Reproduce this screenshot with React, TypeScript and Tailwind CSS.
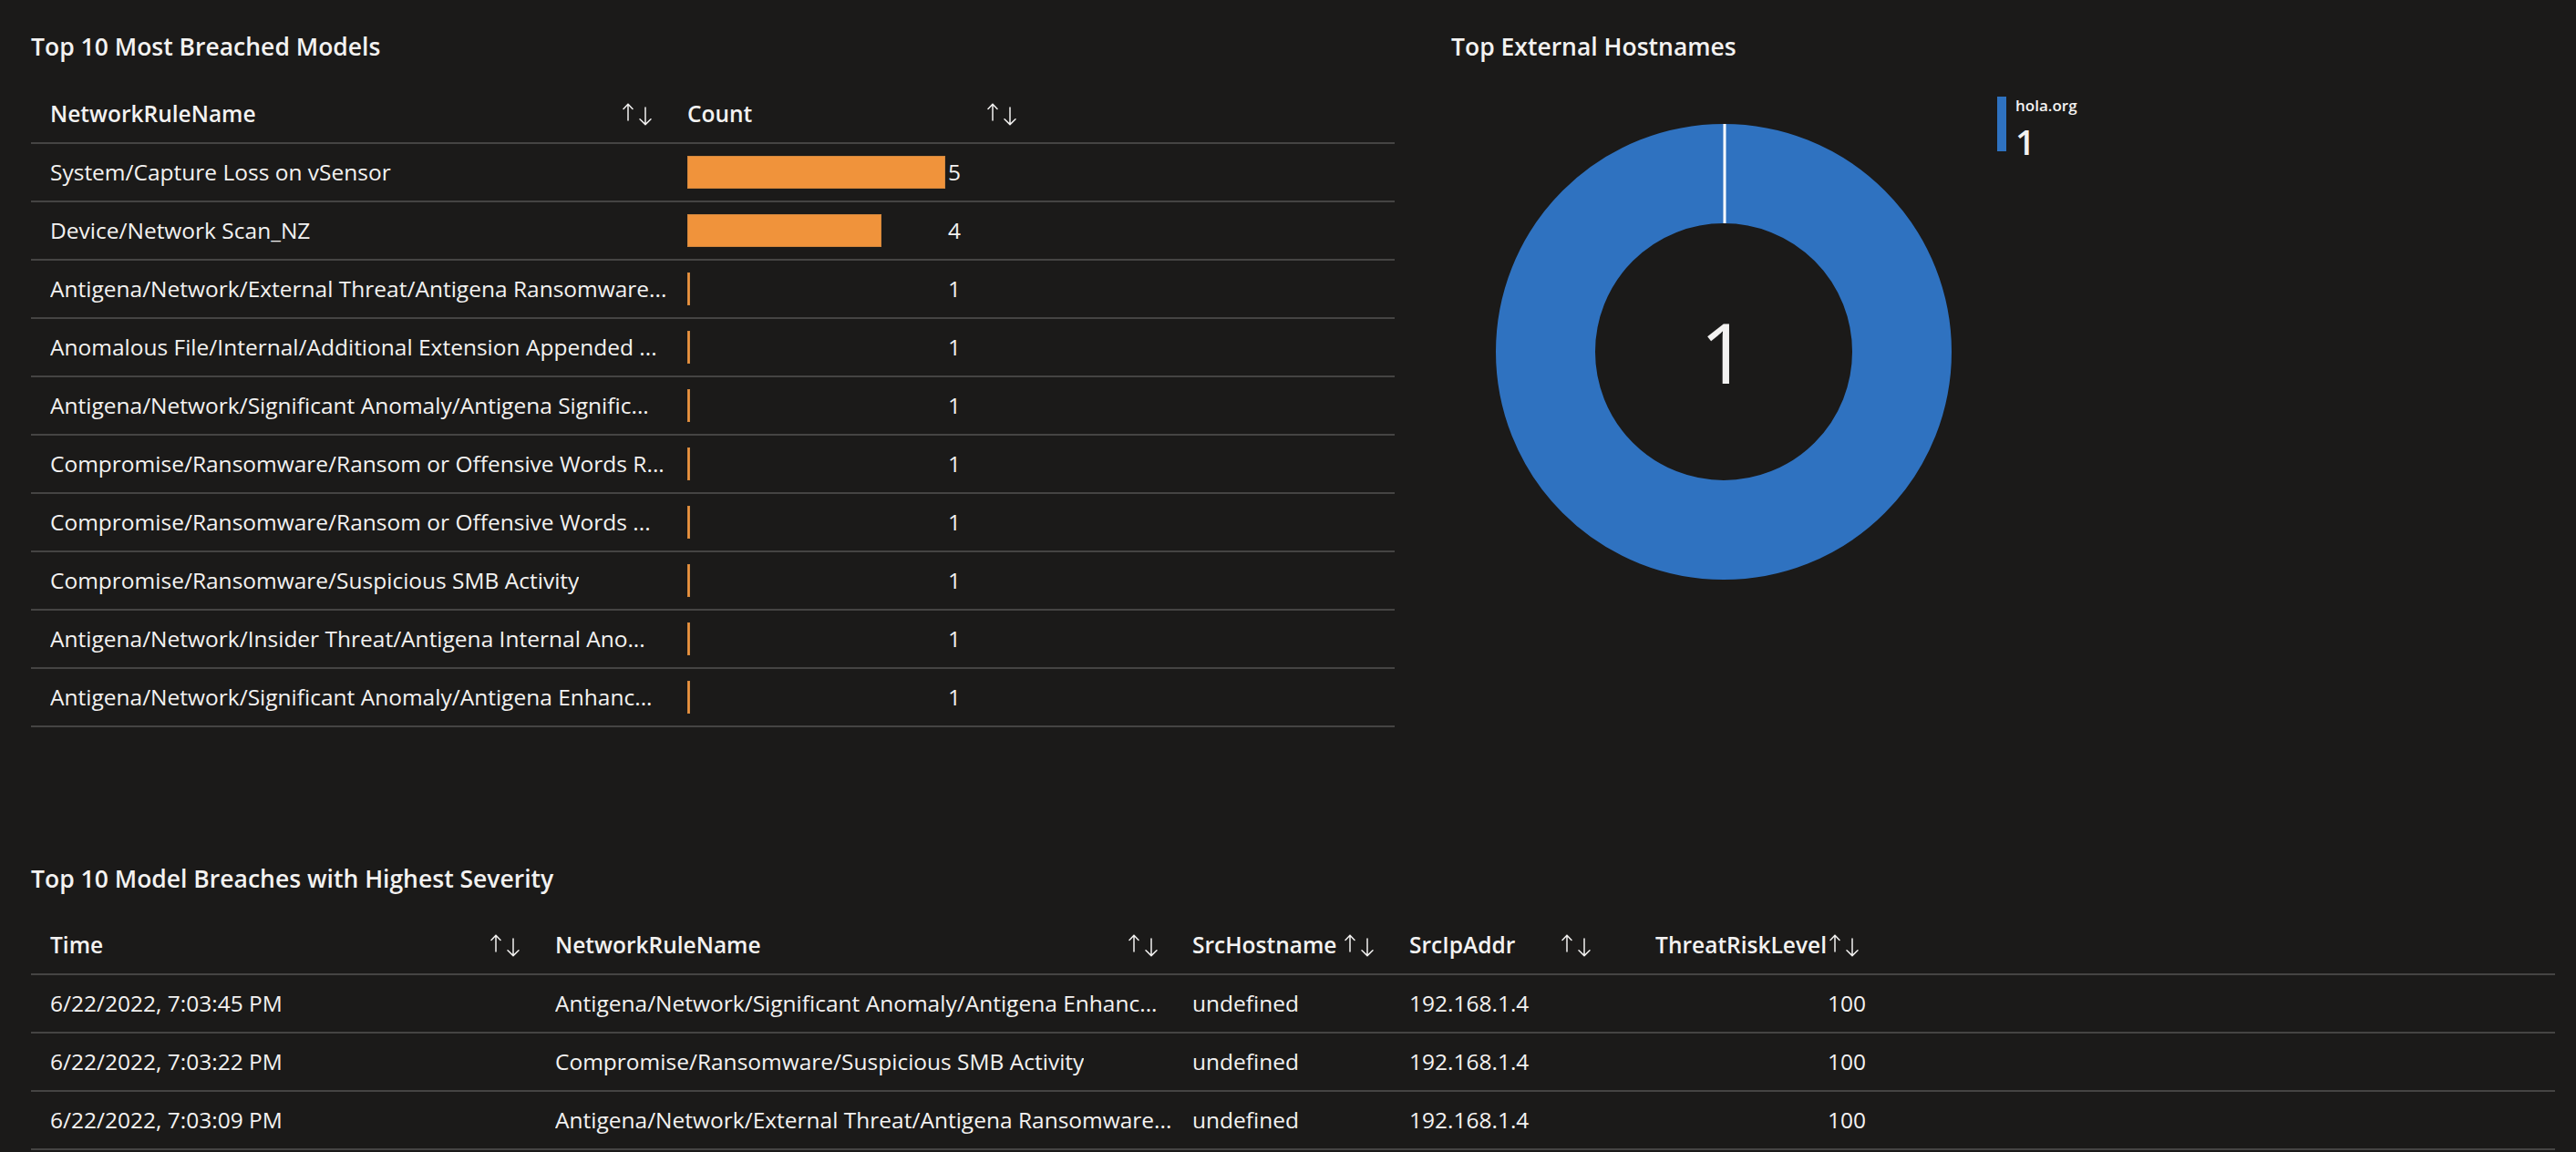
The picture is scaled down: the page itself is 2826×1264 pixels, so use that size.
import React from "react";

const SortIcon = () => (
  <svg
    width="33"
    height="25"
    viewBox="0 0 33 25"
    fill="none"
    stroke="#f3f2f1"
    strokeWidth="1.5"
    strokeLinecap="round"
    strokeLinejoin="round"
    className="shrink-0"
  >
    <path d="M6 1.2V19M1 6.4L6 1.2L11 6.4" />
    <path d="M25 5V23.6M19 17.8L25 23.6L31 17.8" />
  </svg>
);

const breached: [string, number, number][] = [
  ["System/Capture Loss on vSensor", 5, 283],
  ["Device/Network Scan_NZ", 4, 213],
  ["Antigena/Network/External Threat/Antigena Ransomware...", 1, 3],
  ["Anomalous File/Internal/Additional Extension Appended ...", 1, 3],
  ["Antigena/Network/Significant Anomaly/Antigena Signific...", 1, 3],
  ["Compromise/Ransomware/Ransom or Offensive Words R...", 1, 3],
  ["Compromise/Ransomware/Ransom or Offensive Words ...", 1, 3],
  ["Compromise/Ransomware/Suspicious SMB Activity", 1, 3],
  ["Antigena/Network/Insider Threat/Antigena Internal Ano...", 1, 3],
  ["Antigena/Network/Significant Anomaly/Antigena Enhanc...", 1, 3],
];

const severity: [string, string, string, string, string][] = [
  [
    "6/22/2022, 7:03:45 PM",
    "Antigena/Network/Significant Anomaly/Antigena Enhanc...",
    "undefined",
    "192.168.1.4",
    "100",
  ],
  [
    "6/22/2022, 7:03:22 PM",
    "Compromise/Ransomware/Suspicious SMB Activity",
    "undefined",
    "192.168.1.4",
    "100",
  ],
  [
    "6/22/2022, 7:03:09 PM",
    "Antigena/Network/External Threat/Antigena Ransomware...",
    "undefined",
    "192.168.1.4",
    "100",
  ],
];

export default function App() {
  return (
    <div className="w-[2826px] h-[1264px] overflow-hidden bg-[#1b1a19] text-[#f3f2f1] font-['Open_Sans','Noto_Sans',sans-serif]">
      {/* Top section */}
      <div className="flex h-[798px] pt-[32px]">
        {/* Left panel */}
        <div className="w-[1564px] shrink-0 px-[34px]">
          <div className="h-[38px] leading-[38px] text-[26.5px] font-semibold whitespace-nowrap">
            Top 10 Most Breached Models
          </div>
          <div className="mt-[24px]">
            <div className="flex h-[64px] border-b-2 border-[#454443] text-[24.5px] font-semibold">
              <div className="w-[699px] shrink-0 flex items-center justify-between pl-[21px] pr-[17px]">
                <span>NetworkRuleName</span>
                <SortIcon />
              </div>
              <div className="w-[400px] shrink-0 flex items-center justify-between pl-[21px] pr-[17px]">
                <span>Count</span>
                <SortIcon />
              </div>
              <div className="flex-1" />
            </div>
            {breached.map(([name, count, w], i) => (
              <div
                key={i}
                className="flex h-[64px] border-b-2 border-[#454443] text-[24.5px]"
              >
                <div className="w-[699px] shrink-0 flex items-center pl-[21px] overflow-hidden">
                  <span className="whitespace-nowrap overflow-hidden">{name}</span>
                </div>
                <div className="w-[400px] shrink-0 flex items-center pl-[21px]">
                  <div className="w-[283px] shrink-0 flex items-center">
                    <div
                      className="h-[36px] bg-[#f0933b] border border-[#d2873d]"
                      style={{ width: `${w}px` }}
                    />
                  </div>
                  <div className="w-[17px] shrink-0 text-right">{count}</div>
                </div>
                <div className="flex-1" />
              </div>
            ))}
          </div>
        </div>

        {/* Right panel */}
        <div className="flex-1 pl-[28px]">
          <div className="h-[38px] leading-[38px] text-[26.5px] font-semibold whitespace-nowrap">
            Top External Hostnames
          </div>
          <div className="flex items-start mt-[36px]">
            <div className="ml-[49px] mt-[30px] w-[500px] h-[500px] shrink-0">
              <svg width="500" height="500" viewBox="0 0 500 500">
                <circle
                  cx="250"
                  cy="250"
                  r="195.5"
                  fill="none"
                  stroke="#2f72c0"
                  strokeWidth="109"
                />
                <line x1="251" y1="0" x2="251" y2="109" stroke="#ffffff" strokeWidth="3" />
                <text
                  x="250"
                  y="285"
                  textAnchor="middle"
                  fontSize="91"
                  fill="#f3f2f1"
                  fontFamily="'Open Sans', 'Noto Sans', sans-serif"
                >
                  1
                </text>
              </svg>
            </div>
            <div className="ml-[50px] flex items-start">
              <div className="w-[10px] h-[60px] bg-[#2f72c0] shrink-0" />
              <div className="ml-[10px] flex flex-col">
                <div className="text-[17px] leading-[20px] font-semibold">hola.org</div>
                <div className="mt-[9px] text-[38px] leading-[40px] font-semibold">1</div>
              </div>
            </div>
          </div>
        </div>
      </div>

      {/* Bottom section */}
      <div className="pt-[147px] pl-[34px] pr-[23px]">
        <div className="h-[38px] leading-[38px] text-[26.5px] font-semibold whitespace-nowrap">
          Top 10 Model Breaches with Highest Severity
        </div>
        <div className="mt-[23px]">
          <div className="flex h-[64px] border-b-2 border-[#454443] text-[24.5px] font-semibold">
            <div className="w-[554px] shrink-0 flex items-center justify-between pl-[21px] pr-[17px]">
              <span>Time</span>
              <SortIcon />
            </div>
            <div className="w-[699px] shrink-0 flex items-center justify-between pl-[21px] pr-[16px]">
              <span>NetworkRuleName</span>
              <SortIcon />
            </div>
            <div className="w-[238px] shrink-0 flex items-center justify-between pl-[21px] pr-[17px]">
              <span className="whitespace-nowrap">SrcHostname</span>
              <SortIcon />
            </div>
            <div className="w-[238px] shrink-0 flex items-center justify-between pl-[21px] pr-[17px]">
              <span>SrcIpAddr</span>
              <SortIcon />
            </div>
            <div className="w-[300px] shrink-0 flex items-center justify-end pr-[23px] gap-[3px]">
              <span className="whitespace-nowrap">ThreatRiskLevel</span>
              <SortIcon />
            </div>
            <div className="flex-1" />
          </div>
          {severity.map((r, i) => (
            <div
              key={i}
              className="flex h-[64px] border-b-2 border-[#454443] text-[24.5px]"
            >
              <div className="w-[554px] shrink-0 flex items-center pl-[21px] whitespace-nowrap">
                {r[0]}
              </div>
              <div className="w-[699px] shrink-0 flex items-center pl-[21px] overflow-hidden">
                <span className="whitespace-nowrap overflow-hidden">{r[1]}</span>
              </div>
              <div className="w-[238px] shrink-0 flex items-center pl-[21px]">{r[2]}</div>
              <div className="w-[238px] shrink-0 flex items-center pl-[21px]">{r[3]}</div>
              <div className="w-[300px] shrink-0 flex items-center justify-end pr-[16px]">
                {r[4]}
              </div>
              <div className="flex-1" />
            </div>
          ))}
        </div>
      </div>
    </div>
  );
}
